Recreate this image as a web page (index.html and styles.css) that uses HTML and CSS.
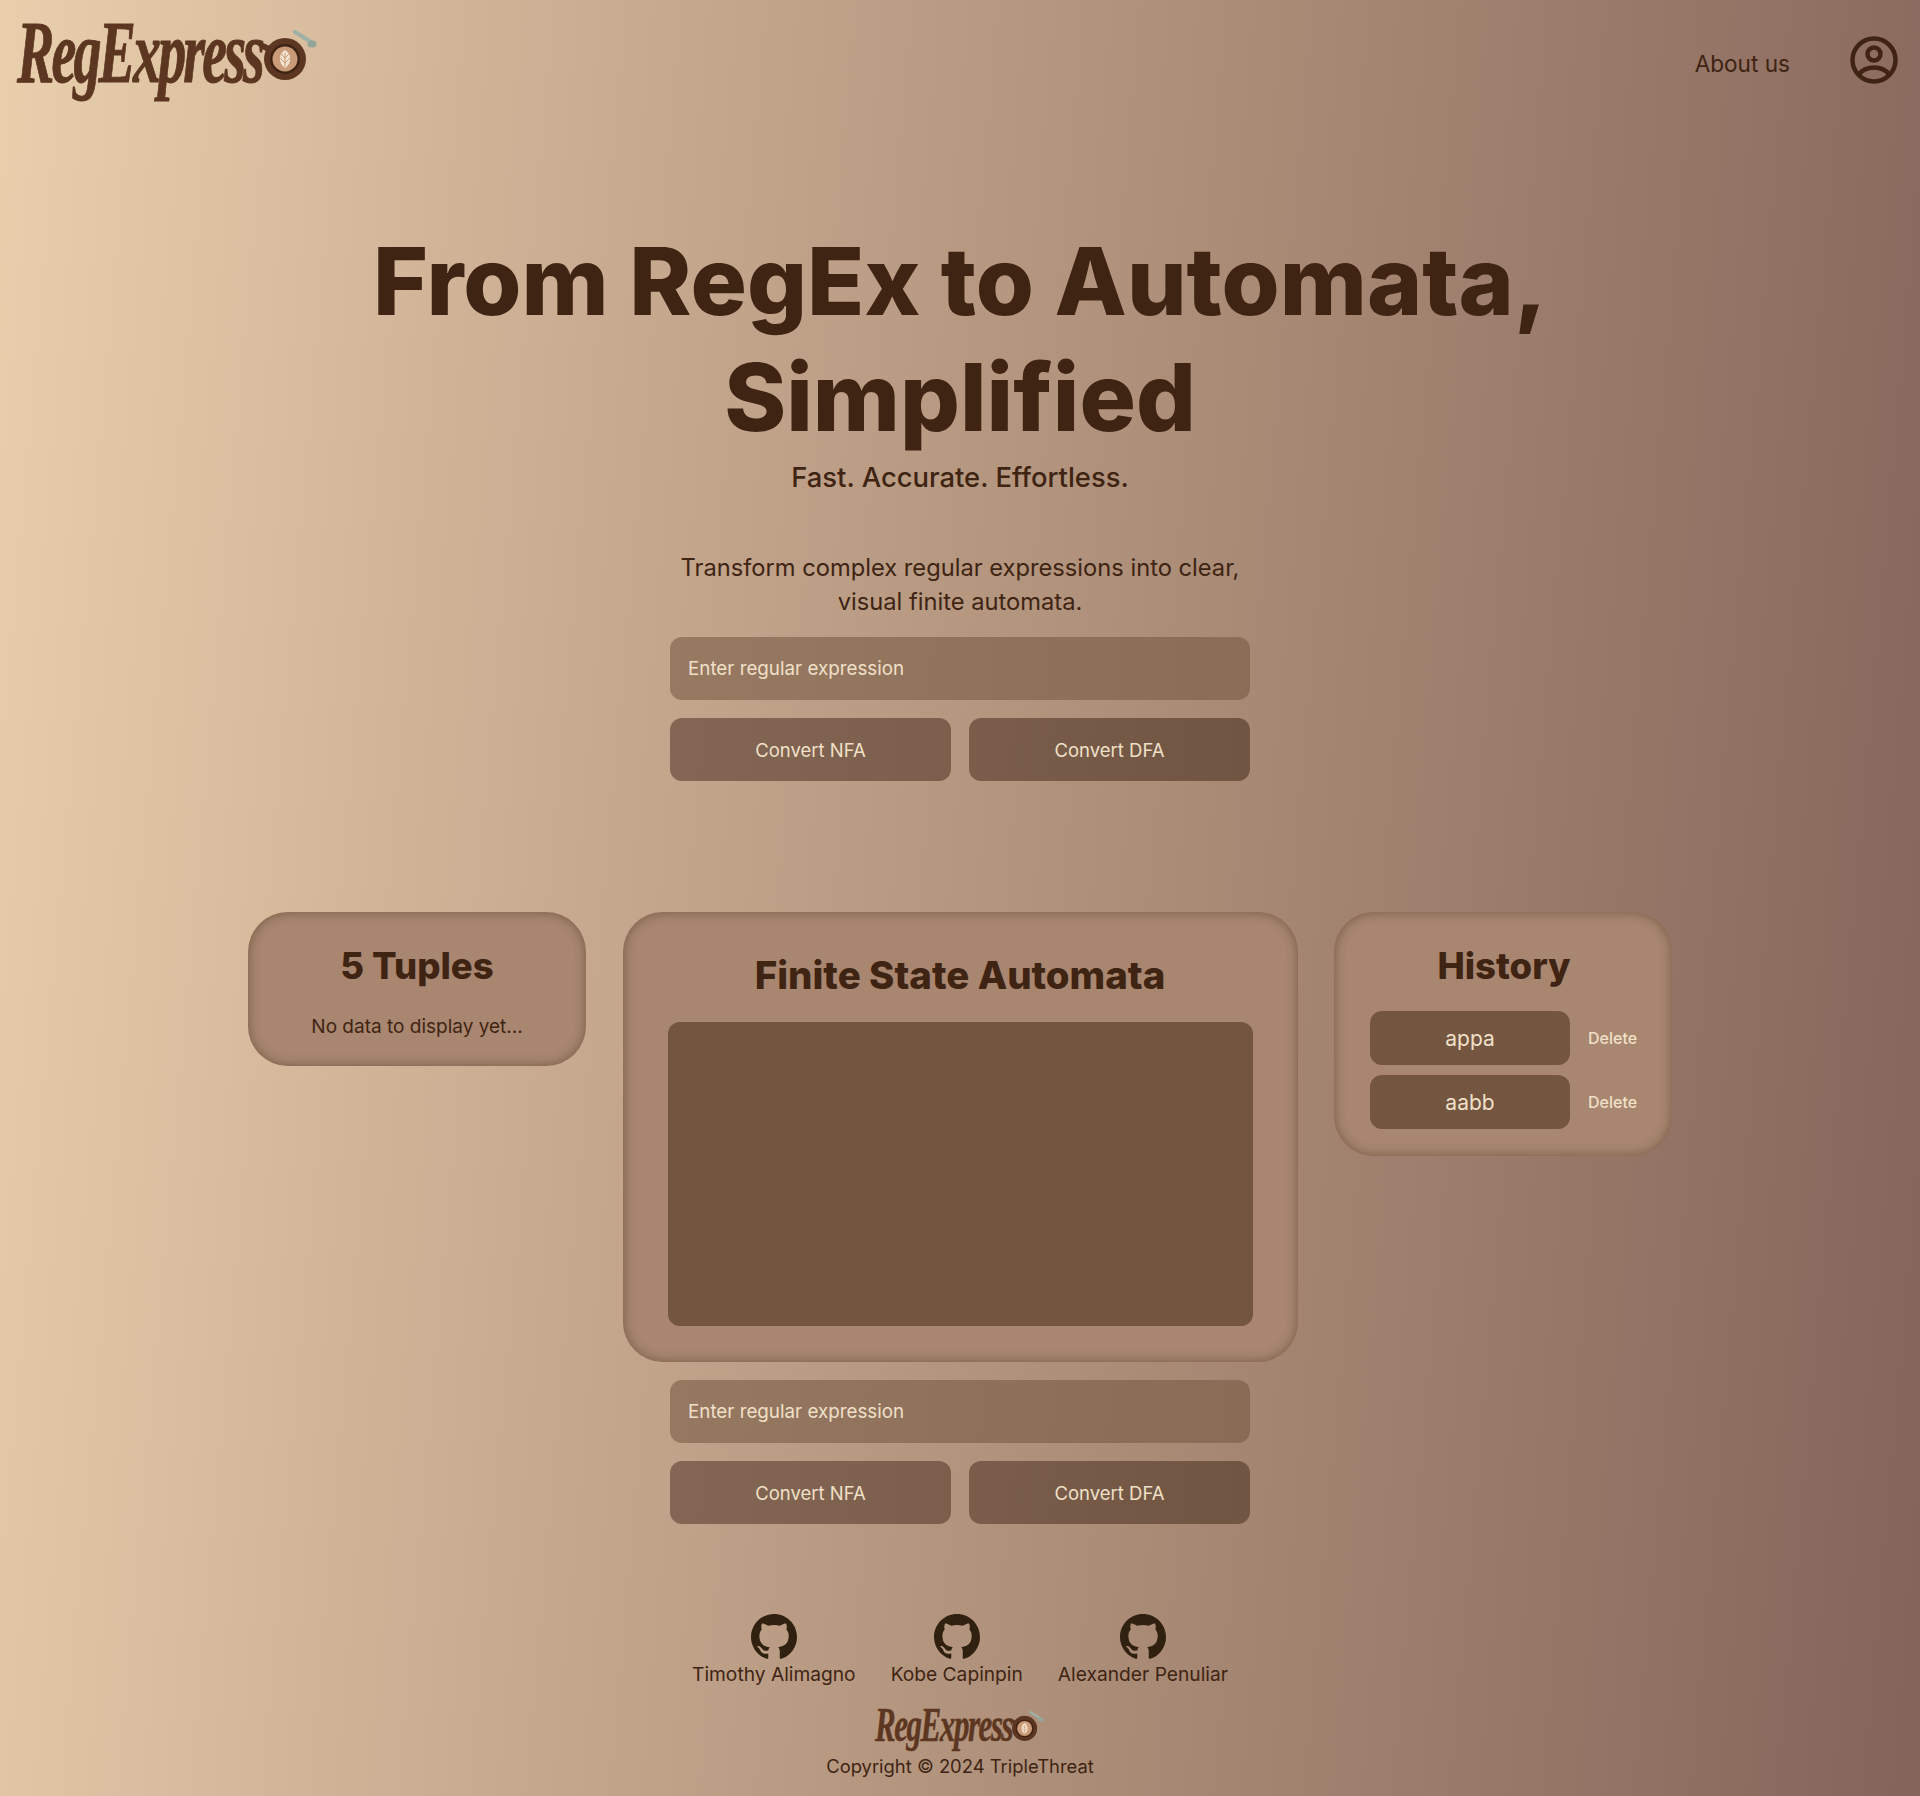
FILE: index.html
```html
<html>
    <head>
        <meta name="viewport" content="width=device-width, initial-scale=1" />
        <title>RegExpresso</title>
        <link rel="stylesheet" href="styles.css">
    </head>
    <body>
        <svg class="defs" width="0" height="0">
            <symbol id="cup" viewBox="0 0 60 50">
                <path d="M36 2 L52 12" stroke="#9fb0a6" stroke-width="4" stroke-linecap="round"/>
                <ellipse cx="53" cy="14" rx="4.5" ry="3.6" fill="#93a49b"/>
                <path d="M2 12 L13 17 L11 23 L1 18 Z" fill="#5c3620"/>
                <circle cx="26" cy="29" r="21" fill="#5c3620"/>
                <circle cx="26" cy="29" r="15" fill="#3f2413"/>
                <circle cx="26" cy="29" r="12.5" fill="#c99b78"/>
                <path d="M26 38 C19 33 19 24 26 20 C33 24 33 33 26 38 Z" fill="#f3e3d0"/>
                <path d="M26 37 L26 23 M26 33 L21 28 M26 33 L31 28 M26 28 L22 24 M26 28 L30 24" stroke="#c99b78" stroke-width="1"/>
            </symbol>
            <symbol id="github" viewBox="0 0 16 16">
                <path d="M8 0C3.58 0 0 3.58 0 8c0 3.54 2.29 6.53 5.47 7.59.4.07.55-.17.55-.38 0-.19-.01-.82-.01-1.49-2.01.37-2.53-.49-2.69-.94-.09-.23-.48-.94-.82-1.13-.28-.15-.68-.52-.01-.53.63-.01 1.08.58 1.23.82.72 1.21 1.87.87 2.33.66.07-.52.28-.87.51-1.07-1.78-.2-3.64-.89-3.64-3.95 0-.87.31-1.59.82-2.15-.08-.2-.36-1.02.08-2.12 0 0 .67-.21 2.2.82.64-.18 1.32-.27 2-.27.68 0 1.36.09 2 .27 1.53-1.04 2.2-.82 2.2-.82.44 1.1.16 1.92.08 2.12.51.56.82 1.27.82 2.15 0 3.07-1.87 3.75-3.65 3.95.29.25.54.73.54 1.48 0 1.07-.01 1.93-.01 2.2 0 .21.15.46.55.38A8.013 8.013 0 0016 8c0-4.42-3.58-8-8-8z"/>
            </symbol>
        </svg>

        <header class="topbar">
            <div class="logo">
                <span class="logo-text">RegExpress</span>
                <svg class="logo-cup"><use href="#cup"/></svg>
            </div>
            <nav class="nav">
                <a class="nav-link">About us</a>
                <svg class="profile" viewBox="0 0 48 48" fill="none" stroke="#3f2413" stroke-width="4.5">
                    <circle cx="24" cy="24" r="21.5"/>
                    <circle cx="24" cy="18" r="6.5"/>
                    <path d="M8 39 C16 29 32 29 40 39"/>
                </svg>
            </nav>
        </header>

        <section class="hero">
            <h1>From RegEx to Automata,<br/>Simplified</h1>
            <h2>Fast. Accurate. Effortless.</h2>
            <p>Transform complex regular expressions into clear,<br/>visual finite automata.</p>
            <form class="convert">
                <input type="text" placeholder="Enter regular expression">
                <div class="convert-buttons">
                    <button type="button">Convert NFA</button>
                    <button type="button">Convert DFA</button>
                </div>
            </form>
        </section>

        <main class="panels">
            <section class="card tuples">
                <h3>5 Tuples</h3>
                <p>No data to display yet...</p>
            </section>
            <section class="card automata">
                <h3>Finite State Automata</h3>
                <div class="canvas"></div>
            </section>
            <section class="card history">
                <h3>History</h3>
                <ul>
                    <li><button class="history-item">appa</button><a class="delete">Delete</a></li>
                    <li><button class="history-item">aabb</button><a class="delete">Delete</a></li>
                </ul>
            </section>
        </main>

        <form class="convert convert-lower">
            <input type="text" placeholder="Enter regular expression">
            <div class="convert-buttons">
                <button type="button">Convert NFA</button>
                <button type="button">Convert DFA</button>
            </div>
        </form>

        <footer class="footer">
            <div class="devs">
                <a class="dev"><svg class="github"><use href="#github"/></svg>Timothy Alimagno</a>
                <a class="dev"><svg class="github"><use href="#github"/></svg>Kobe Capinpin</a>
                <a class="dev"><svg class="github"><use href="#github"/></svg>Alexander Penuliar</a>
            </div>
            <div class="logo logo-small">
                <span class="logo-text">RegExpress</span>
                <svg class="logo-cup"><use href="#cup"/></svg>
            </div>
            <p class="copyright">Copyright © 2024 TripleThreat</p>
        </footer>
    </body>
</html>
```

FILE: styles.css
```css
* {
    box-sizing: border-box;
}
body {
    margin: 0;
    min-height: 100vh;
    font-family: Inter, 'Noto Sans', sans-serif;
    color: #3f2413;
    background: linear-gradient(95deg, #e9cfac 0%, #c9ab91 30%, #a98a75 62%, #84645a 100%);
}
.defs {
    position: absolute;
}
h1, h2, h3, p, ul {
    margin: 0;
    padding: 0;
}

.topbar {
    height: 118px;
    padding: 12px 22px 0 17px;
    display: flex;
    justify-content: space-between;
    align-items: flex-start;
}
.logo {
    display: flex;
    align-items: flex-end;
    color: #5c3620;
}
.logo-text {
    font-family: 'Liberation Serif', serif;
    font-style: italic;
    font-weight: 700;
    font-size: 88px;
    line-height: 82px;
    letter-spacing: -4.5px;
    -webkit-text-stroke: 1px #5c3620;
    transform: scaleX(0.636);
    transform-origin: left center;
    margin-right: -141px;
}
.logo-cup {
    width: 60px;
    height: 50px;
    margin: 0 0 14px -2px;
}
.nav {
    display: flex;
    align-items: center;
    gap: 60px;
    margin-top: 24px;
}
.nav-link {
    font-size: 22.6px;
    margin-top: 6px;
}
.profile {
    width: 48px;
    height: 48px;
}

.hero {
    padding-top: 105px;
    text-align: center;
}
h1 {
    font-size: 94px;
    line-height: 116px;
    font-weight: 800;
}
h2 {
    font-size: 27.4px;
    line-height: 42px;
    font-weight: 500;
    margin-top: 1px;
}
.hero p {
    font-size: 23.7px;
    line-height: 34px;
    margin-top: 53px;
}

.convert {
    width: 580px;
    margin: 18px auto 0;
    display: flex;
    flex-direction: column;
    gap: 18px;
}
.convert input {
    height: 63px;
    padding: 0 18px;
    border: none;
    outline: none;
    border-radius: 12px;
    font: inherit;
    font-size: 18.8px;
    color: #f0e0c8;
    background: rgba(115, 85, 64, 0.55);
}
.convert input::placeholder {
    color: #f0e0c8;
    opacity: 1;
}
.convert-buttons {
    display: flex;
    gap: 18px;
}
.convert-buttons button {
    flex: 1;
    height: 63px;
    border: none;
    border-radius: 12px;
    font: inherit;
    font-size: 18.5px;
    color: #f0e0c8;
    background: linear-gradient(95deg, #836653, #7b5f4c);
}
.convert-buttons button:last-child {
    background: linear-gradient(95deg, #7a5d4b, #705542);
}
.convert-lower {
    margin-top: 18px;
}

.panels {
    margin-top: 131px;
    display: grid;
    grid-template-columns: 338px 675px 338px;
    justify-content: center;
    align-items: start;
    gap: 36.5px;
}
.card {
    background: #a8866f;
    border-radius: 40px;
    box-shadow: inset 0 0 12px rgba(60, 35, 20, 0.45);
    text-align: center;
}
.card h3 {
    font-size: 36.5px;
    line-height: 52px;
    font-weight: 800;
}
.tuples {
    padding: 28px 20px 24px;
}
.tuples p {
    font-size: 19px;
    line-height: 30px;
    margin-top: 20px;
}
.automata {
    padding: 33px 45px 36px;
}
.automata h3 {
    font-size: 38.4px;
    line-height: 60px;
}
.canvas {
    height: 304px;
    margin-top: 17px;
    border-radius: 12px;
    background: #735540;
}
.history {
    padding: 28px 34px 27px 36px;
}
.history ul {
    list-style: none;
    margin-top: 19px;
    display: flex;
    flex-direction: column;
    gap: 10px;
}
.history li {
    display: flex;
    align-items: center;
    gap: 18px;
}
.history-item {
    width: 200px;
    height: 54px;
    flex-shrink: 0;
    border: none;
    border-radius: 12px;
    font: inherit;
    font-size: 21px;
    color: #f0e0c8;
    background: #735540;
}
.delete {
    font-size: 16px;
    font-weight: 500;
    color: #f0e0c8;
}

.footer {
    margin-top: 90px;
    text-align: center;
}
.devs {
    display: flex;
    justify-content: center;
    gap: 35px;
}
.dev {
    display: flex;
    flex-direction: column;
    align-items: center;
    font-size: 19.2px;
    line-height: 30px;
}
.github {
    width: 46px;
    height: 46px;
    margin-bottom: -1px;
    fill: #30200f;
}
.logo-small {
    justify-content: center;
    margin-top: 13px;
    height: 46px;
}
.logo-small .logo-text {
    font-size: 48px;
    line-height: 46px;
    letter-spacing: -2.2px;
    -webkit-text-stroke: 0.5px #5c3620;
    transform: scaleX(0.645);
    margin-right: -76px;
}
.logo-small .logo-cup {
    width: 36px;
    height: 30px;
    margin: 0 0 7px -3px;
}
.copyright {
    font-size: 18.4px;
    line-height: 30px;
    margin-top: 3px;
}
```
